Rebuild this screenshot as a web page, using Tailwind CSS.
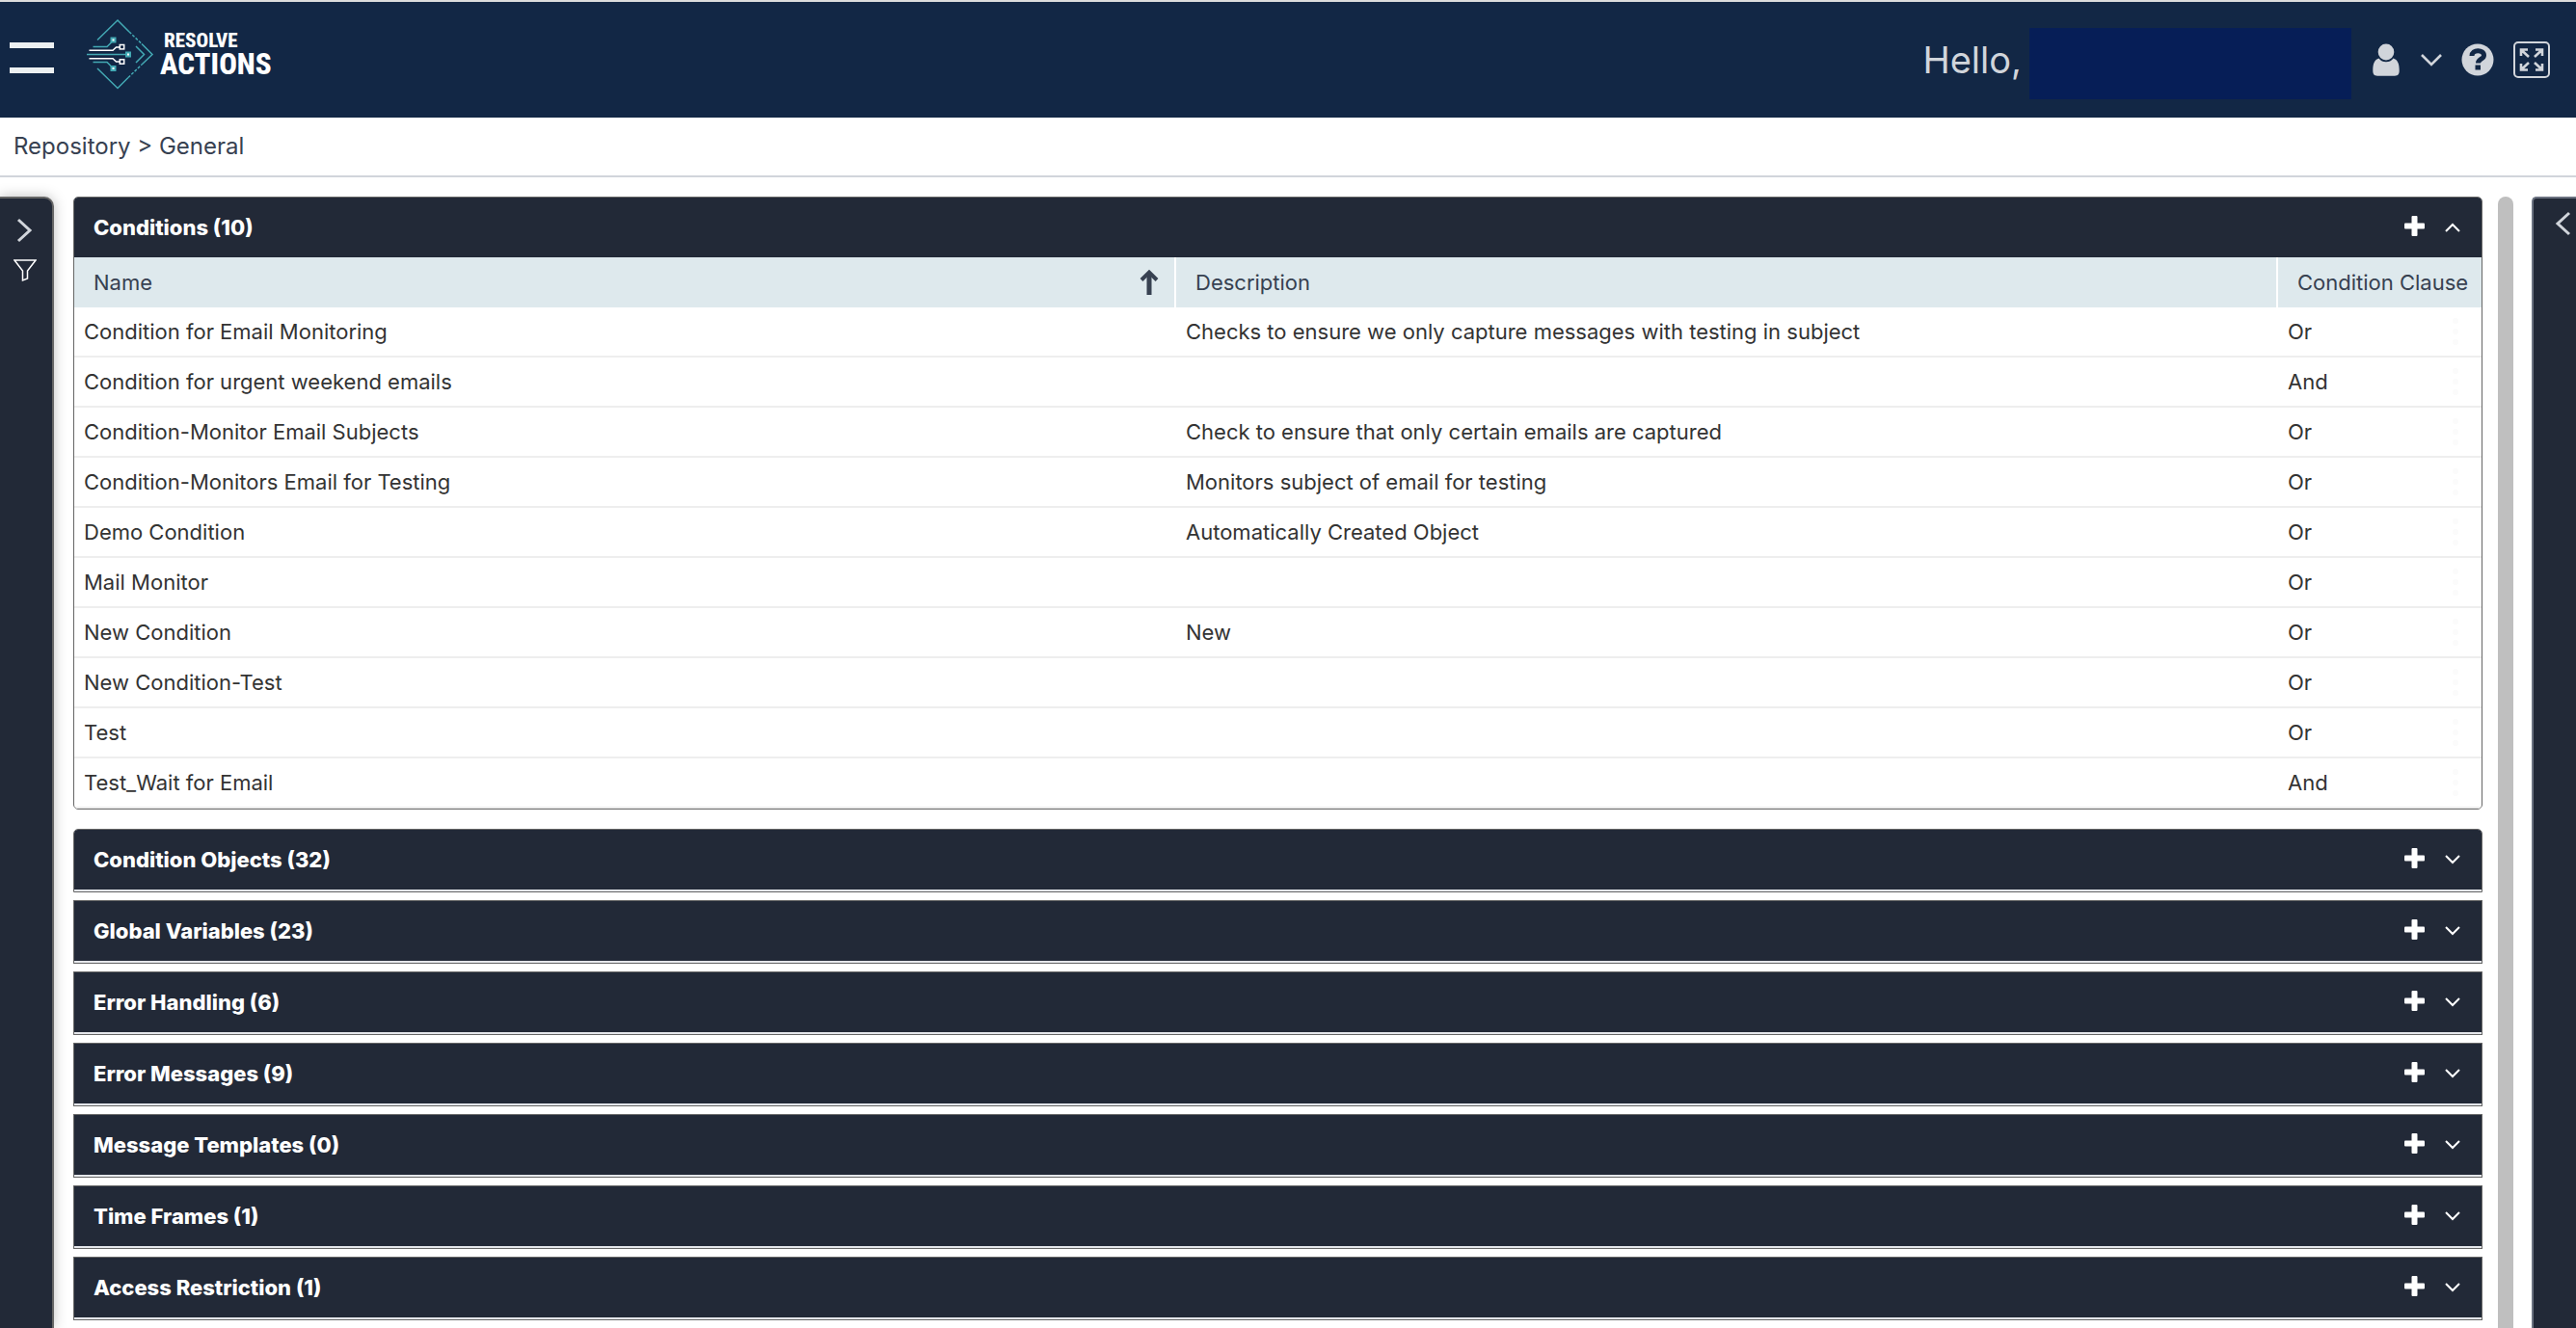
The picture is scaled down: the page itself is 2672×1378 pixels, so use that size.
<!DOCTYPE html>
<html lang="en">
<head>
  <meta charset="UTF-8" />
  <meta name="viewport" content="width=device-width, initial-scale=1.0" />
  <title>Resolve Actions - Repository</title>
  <script src="https://cdn.jsdelivr.net/npm/@tailwindcss/browser@4"></script>
</head>
<body class="bg-white font-['Inter',sans-serif] text-[22px] text-[#333]">

<div class="h-screen flex flex-col overflow-hidden">

  <header class="h-[122px] shrink-0 border-t-2 border-[#dcdcdc] bg-[#122745] flex items-center justify-between">
    <div class="flex items-center self-start pt-4 pl-2.5">
      <button type="button" aria-label="Menu" class="flex flex-col gap-5 mt-2 w-[46px]">
        <span class="block w-full h-1.5 bg-[#ecf0f1]"></span>
        <span class="block w-full h-1.5 bg-[#ecf0f1]"></span>
      </button>
      <a href="#" aria-label="Resolve Actions" class="flex items-center gap-1 ml-8">
        <svg class="w-[74px] h-[76px]" viewBox="8 8 74 76" fill="none" stroke-width="1.5">
          <g stroke="#43a9b4">
            <path d="M21 31.5L42 11L54 23M21 61L42 81.5L53 70.5M67 35.5L78 46.5L67 57" />
            <path d="M54 23L67 35.5M53 70.5L67 57" stroke-dasharray="3 1.6" />
            <path d="M61 38L69.5 46.5L61 55" />
            <path d="M16.5 38.5H31L37.5 32M10 46.5H50M16.5 54.5H31L37.5 61" />
          </g>
          <path d="M12.5 42.3H37L40.5 39H44M12.5 50.7H37L40.5 54H44" stroke="#fff" />
          <g fill="#fff" stroke="#43a9b4" stroke-width="2">
            <rect x="35.5" y="29.5" width="4" height="4" />
            <rect x="51" y="44.5" width="4" height="4" />
            <rect x="35.5" y="59" width="4" height="4" />
          </g>
          <g stroke="#fff">
            <rect x="44.3" y="36.5" width="4.4" height="4.4" />
            <rect x="44.3" y="51.8" width="4.4" height="4.4" />
          </g>
        </svg>
        <span class="flex flex-col text-white font-extrabold font-['Roboto_Condensed','Open_Sans_Condensed','Roboto',sans-serif]">
          <span class="text-[21px] leading-[22px] pl-1">RESOLVE</span>
          <span class="text-[31px] leading-7">ACTIONS</span>
        </span>
      </a>
    </div>

    <div class="flex items-center text-[#d1d5db] pr-[27px]">
      <span class="text-[38px] mr-2">Hello,</span>
      <span class="w-[334px] h-[74px] mt-2 mr-[22px] bg-[#061e57]"></span>
      <button type="button" aria-label="User menu" class="flex items-center gap-[22px]">
        <svg class="w-7 h-[34px]" viewBox="0 0 28 34" fill="currentColor">
          <ellipse cx="14" cy="9" rx="8.3" ry="8.5" />
          <path d="M6.5 15.5C8.5 18.2 11 19.3 14 19.3S19.5 18.2 21.5 15.5C26 17 27.7 21 27.7 28C27.7 32 26.5 33.7 23 33.7H5C1.5 33.7 .3 32 .3 28C.3 21 2 17 6.5 15.5Z" />
        </svg>
        <svg class="w-[22px] h-[14px]" viewBox="0 0 22 14" fill="none" stroke="currentColor" stroke-width="2.6">
          <path d="M1 2L11 12L21 2" />
        </svg>
      </button>
      <button type="button" aria-label="Help" class="ml-5">
        <svg class="w-[34px] h-[34px]" viewBox="0 0 34 34">
          <circle cx="17" cy="17" r="16.5" fill="currentColor" />
          <path d="M11 13C11 6 23.5 6 23.5 12.5C23.5 16.5 17.5 16 17.5 20.5" fill="none" stroke="#122745" stroke-width="5" />
          <rect x="14.5" y="22.5" width="5.5" height="5" fill="#122745" />
        </svg>
      </button>
      <button type="button" aria-label="Full screen" class="ml-5">
        <svg class="w-[38px] h-[38px]" viewBox="0 0 38 38" fill="none" stroke="currentColor" stroke-width="2">
          <rect x="1" y="1" width="36" height="36" rx="4" />
          <path d="M8 15V8.5H15M8.5 9L16 16M23 8.5H30V15M29.5 9L22 16M8 23V29.5H15M8.5 29L16 22M23 29.5H30V23M29.5 29L22 22" stroke-width="2.6" />
        </svg>
      </button>
    </div>
  </header>

  <nav class="h-[62px] shrink-0 border-b-2 border-[#d1d5db] flex items-center px-3.5 text-[24px] text-[#374151]">
    <span>Repository &gt; General</span>
  </nav>

  <div class="flex-1 min-h-0 flex pt-5">
    <aside class="w-14 shrink-0 mr-5 border-t-2 border-r-2 border-[#666] rounded-tr-[10px] bg-[#222937] text-[#d1d5db] shadow-[0_0_14px_rgba(0,0,0,0.25)]">
      <button type="button" aria-label="Expand filters" class="block mt-5 ml-[17px]">
        <svg class="w-[17px] h-[26px]" viewBox="0 0 17 26" fill="none" stroke="currentColor" stroke-width="3">
          <path d="M2 2L14 13L2 24" />
        </svg>
      </button>
      <button type="button" aria-label="Filter" class="block mt-[17px] ml-3.5 text-white">
        <svg class="w-6 h-6" viewBox="0 0 24 24" fill="none" stroke="currentColor" stroke-width="1.5">
          <path d="M1 1H23L14.5 12V20L9.5 22V12Z" />
        </svg>
      </button>
    </aside>

    <main id="panels" class="flex-1 min-w-0 flex flex-col gap-2">
      <section class="shrink-0 mb-3 border border-[#666] rounded-[5px] overflow-hidden">
        <div class="h-[62px] pl-5 pr-[22px] flex items-center justify-between bg-[#222937] text-white">
          <h2 class="font-extrabold">Conditions (10)</h2>
          <div class="flex items-center gap-[21px]">
            <button type="button" aria-label="Add condition" class="mb-1">
              <svg class="w-[21px] h-[21px]" viewBox="0 0 21 21" fill="currentColor">
                <rect x="7.5" width="6" height="21" rx="1" />
                <rect y="7.5" width="21" height="6" rx="1" />
              </svg>
            </button>
            <button type="button" aria-label="Collapse">
              <svg class="w-4 h-2.5" viewBox="0 0 16 10" fill="none" stroke="currentColor" stroke-width="2">
                <path d="M1 9L8 2L15 9" />
              </svg>
            </button>
          </div>
        </div>
        <table class="w-full table-fixed border-separate border-spacing-0 text-left">
          <colgroup>
            <col />
            <col />
            <col class="w-[211px]" />
          </colgroup>
          <thead class="bg-[#dee9ed] text-[#374151]">
            <tr class="h-[52px]">
              <th class="pl-5 pr-4 font-normal border-r-2 border-white">
                <div class="flex items-center justify-between">
                  Name
                  <svg class="w-5 h-7" viewBox="0 0 20 28" fill="none" stroke="currentColor">
                    <path d="M10 27V4" stroke-width="5" />
                    <path d="M2 11.5L10 3.5L18 11.5" stroke-width="4" />
                  </svg>
                </div>
              </th>
              <th class="pl-5 font-normal border-r-2 border-white">Description</th>
              <th class="pl-5 font-normal whitespace-nowrap">Condition Clause</th>
            </tr>
          </thead>
          <tbody id="conditions"></tbody>
        </table>
      </section>
    </main>

    <div class="w-4 shrink-0 ml-4 mr-[19px] rounded-t-full bg-[#bfbfbf]"></div>

    <aside class="w-[46px] shrink-0 border-t-2 border-l-2 border-[#6b7280] rounded-tl-[5px] bg-[#222937] text-[#d1d5db]">
      <button type="button" aria-label="Expand details" class="block mt-[13px] ml-[22px]">
        <svg class="w-[17px] h-[26px]" viewBox="0 0 17 26" fill="none" stroke="currentColor" stroke-width="3">
          <path d="M15 2L3 13L15 24" />
        </svg>
      </button>
    </aside>
  </div>
</div>

<script>
  const conditions = [
    ['Condition for Email Monitoring', 'Checks to ensure we only capture messages with testing in subject', 'Or'],
    ['Condition for urgent weekend emails', '', 'And'],
    ['Condition-Monitor Email Subjects', 'Check to ensure that only certain emails are captured', 'Or'],
    ['Condition-Monitors Email for Testing', 'Monitors subject of email for testing', 'Or'],
    ['Demo Condition', 'Automatically Created Object', 'Or'],
    ['Mail Monitor', '', 'Or'],
    ['New Condition', 'New', 'Or'],
    ['New Condition-Test', '', 'Or'],
    ['Test', '', 'Or'],
    ['Test_Wait for Email', '', 'And'],
  ];

  const sections = [
    'Condition Objects (32)',
    'Global Variables (23)',
    'Error Handling (6)',
    'Error Messages (9)',
    'Message Templates (0)',
    'Time Frames (1)',
    'Access Restriction (1)',
  ];

  document.getElementById('conditions').innerHTML = conditions.map(([name, description, clause]) => `
    <tr class="h-[52px]">
      <td class="pl-2.5 border-b-2 border-[#eee]">${name}</td>
      <td class="pl-2.5 border-b-2 border-[#eee]">${description}</td>
      <td class="pl-2.5 pr-6 border-b-2 border-[#eee]">
        <div class="flex items-center justify-between">
          ${clause}
          <button type="button" aria-label="Row menu" class="text-[#fbfbfb]">
            <svg class="w-1.5 h-7" viewBox="0 0 6 28" fill="currentColor">
              <circle cx="3" cy="3" r="3" />
              <circle cx="3" cy="14" r="3" />
              <circle cx="3" cy="25" r="3" />
            </svg>
          </button>
        </div>
      </td>
    </tr>
  `).join('');

  document.getElementById('panels').insertAdjacentHTML('beforeend', sections.map((title, i) => `
    <section class="shrink-0 border border-[#666] overflow-hidden ${i === 0 ? 'rounded-t-[5px]' : ''}">
      <div class="h-16 pl-5 pr-[22px] flex items-center justify-between bg-[#222937] text-white border-b-2 border-gray-200">
        <h2 class="font-extrabold">${title}</h2>
        <div class="flex items-center gap-[21px]">
          <button type="button" aria-label="Add" class="mb-1">
            <svg class="w-[21px] h-[21px]" viewBox="0 0 21 21" fill="currentColor">
              <rect x="7.5" width="6" height="21" rx="1" />
              <rect y="7.5" width="21" height="6" rx="1" />
            </svg>
          </button>
          <button type="button" aria-label="Expand">
            <svg class="w-4 h-2.5" viewBox="0 0 16 10" fill="none" stroke="currentColor" stroke-width="2">
              <path d="M1 1L8 8L15 1" />
            </svg>
          </button>
        </div>
      </div>
    </section>
  `).join(''));
</script>

</body>
</html>
